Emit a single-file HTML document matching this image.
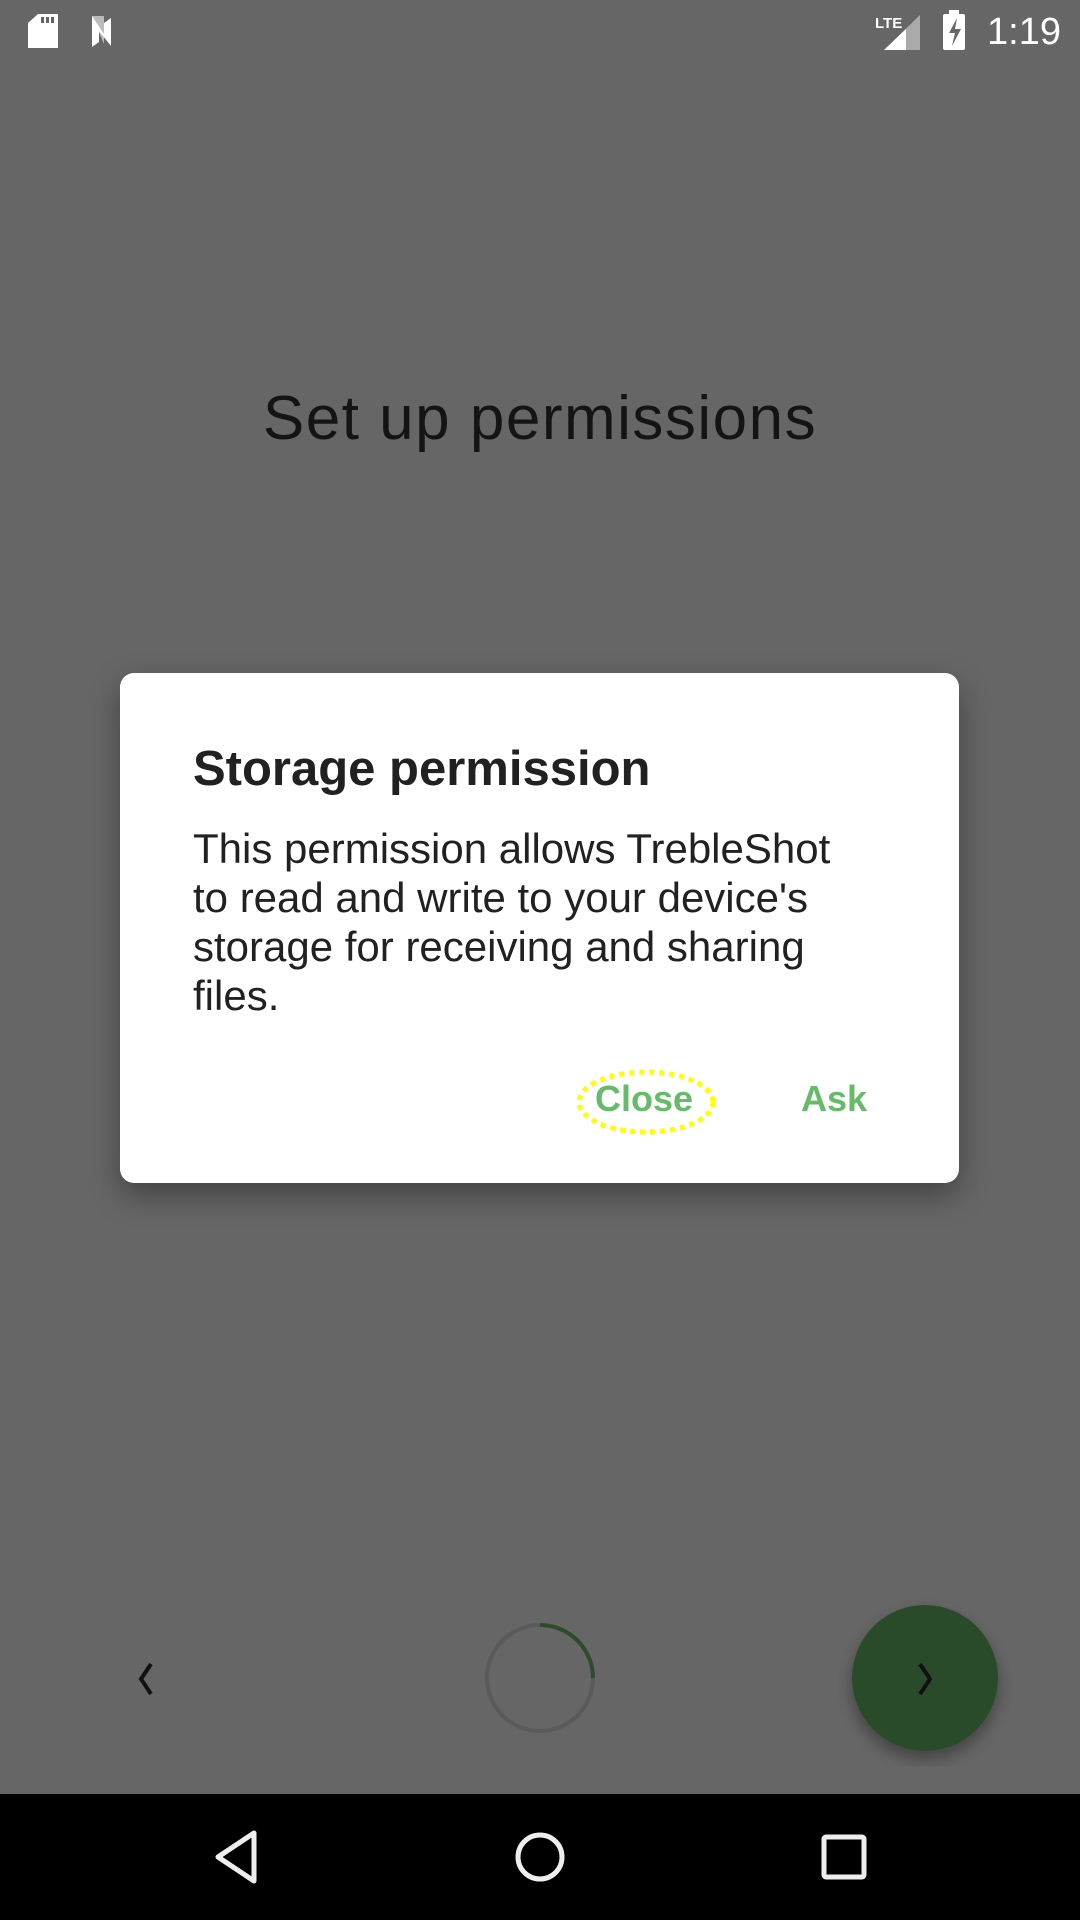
<!DOCTYPE html>
<html><head><meta charset="utf-8"><style>
*{margin:0;padding:0;box-sizing:border-box}
html,body{width:1080px;height:1920px;overflow:hidden;background:#666666;font-family:"Liberation Sans",sans-serif}
.abs{position:absolute}
.title{left:0;width:1080px;top:383px;text-align:center;font-size:62px;color:#141414;letter-spacing:1.5px}
.dlg{left:120px;top:673px;width:839px;height:510px;background:#fff;border-radius:14px;box-shadow:0 12px 30px rgba(0,0,0,.35)}
.dt{left:73px;top:68px;font-size:49px;font-weight:bold;color:#212121}
.db{left:73px;top:151px;width:660px;font-size:42px;line-height:49px;color:#212121}
.btn{font-size:36px;font-weight:bold;color:#66bb6a;top:405px}
.nav{left:0;top:1794px;width:1080px;height:126px;background:#000}
</style></head><body>
<svg class="abs" style="left:0;top:0" width="1080" height="64">
<path d="M38 14h20v34h-30v-25z" fill="#fff"/>
<rect x="41" y="17" width="3" height="6" fill="#666"/><rect x="46" y="17" width="3" height="6" fill="#666"/><rect x="51" y="17" width="3" height="6" fill="#666"/>
<path d="M92 16l12 0v28z" fill="#bbb"/><path d="M92 16v31l7-5v-11l12 15v-28l-7 5v11z" fill="#fff"/>
<text x="875" y="28" font-size="15" font-weight="bold" fill="#fff" font-family="Liberation Sans">LTE</text>
<path d="M884 50l36-35v35z" fill="#aaa"/><path d="M884 50l22-21v21z" fill="#fff"/>
<rect x="943" y="14" width="22" height="36" rx="2" fill="#fff"/><rect x="949" y="10" width="10" height="5" fill="#fff"/>
<path d="M957 18l-8 15h6l-3 13 9-17h-6z" fill="#666"/>
<text x="987" y="44" font-size="38" fill="#fff" font-family="Liberation Sans">1:19</text>
</svg>
<div class="abs title">Set up permissions</div>
<div class="abs dlg">
<div class="abs dt">Storage permission</div>
<div class="abs db">This permission allows TrebleShot to read and write to your device's storage for receiving and sharing files.</div>
<svg class="abs" style="left:456px;top:396px" width="140" height="66"><ellipse cx="70" cy="33" rx="67" ry="30" fill="none" stroke="#ffff00" stroke-width="5" stroke-dasharray="5 5"/></svg>
<div class="abs btn" style="left:475px">Close</div>
<div class="abs btn" style="left:681px">Ask</div>
</div>
<svg class="abs" style="left:0;top:1580px" width="1080" height="214">
<path d="M151 84l-10 15 10 15" fill="none" stroke="#111" stroke-width="4"/>
<circle cx="540" cy="98" r="53" fill="none" stroke="#5a5a5a" stroke-width="4"/>
<path d="M540 45a53 53 0 0 1 53 53" fill="none" stroke="#2c4c2c" stroke-width="4"/>
<defs><filter id="s"><feDropShadow dx="0" dy="8" stdDeviation="8" flood-opacity=".35"/></filter></defs>
<circle cx="925" cy="98" r="73" fill="#2c4c2c" filter="url(#s)"/>
<path d="M920 84l10 15-10 15" fill="none" stroke="#111" stroke-width="4"/>
</svg>
<div class="abs nav"></div>
<svg class="abs" style="left:0;top:1794px" width="1080" height="126">
<path d="M254 39v48l-36-24z" fill="none" stroke="#eee" stroke-width="5" stroke-linejoin="round"/>
<circle cx="540" cy="63" r="22" fill="none" stroke="#eee" stroke-width="5"/>
<rect x="824" y="43" width="40" height="40" rx="2" fill="none" stroke="#eee" stroke-width="5"/>
</svg>
</body></html>
